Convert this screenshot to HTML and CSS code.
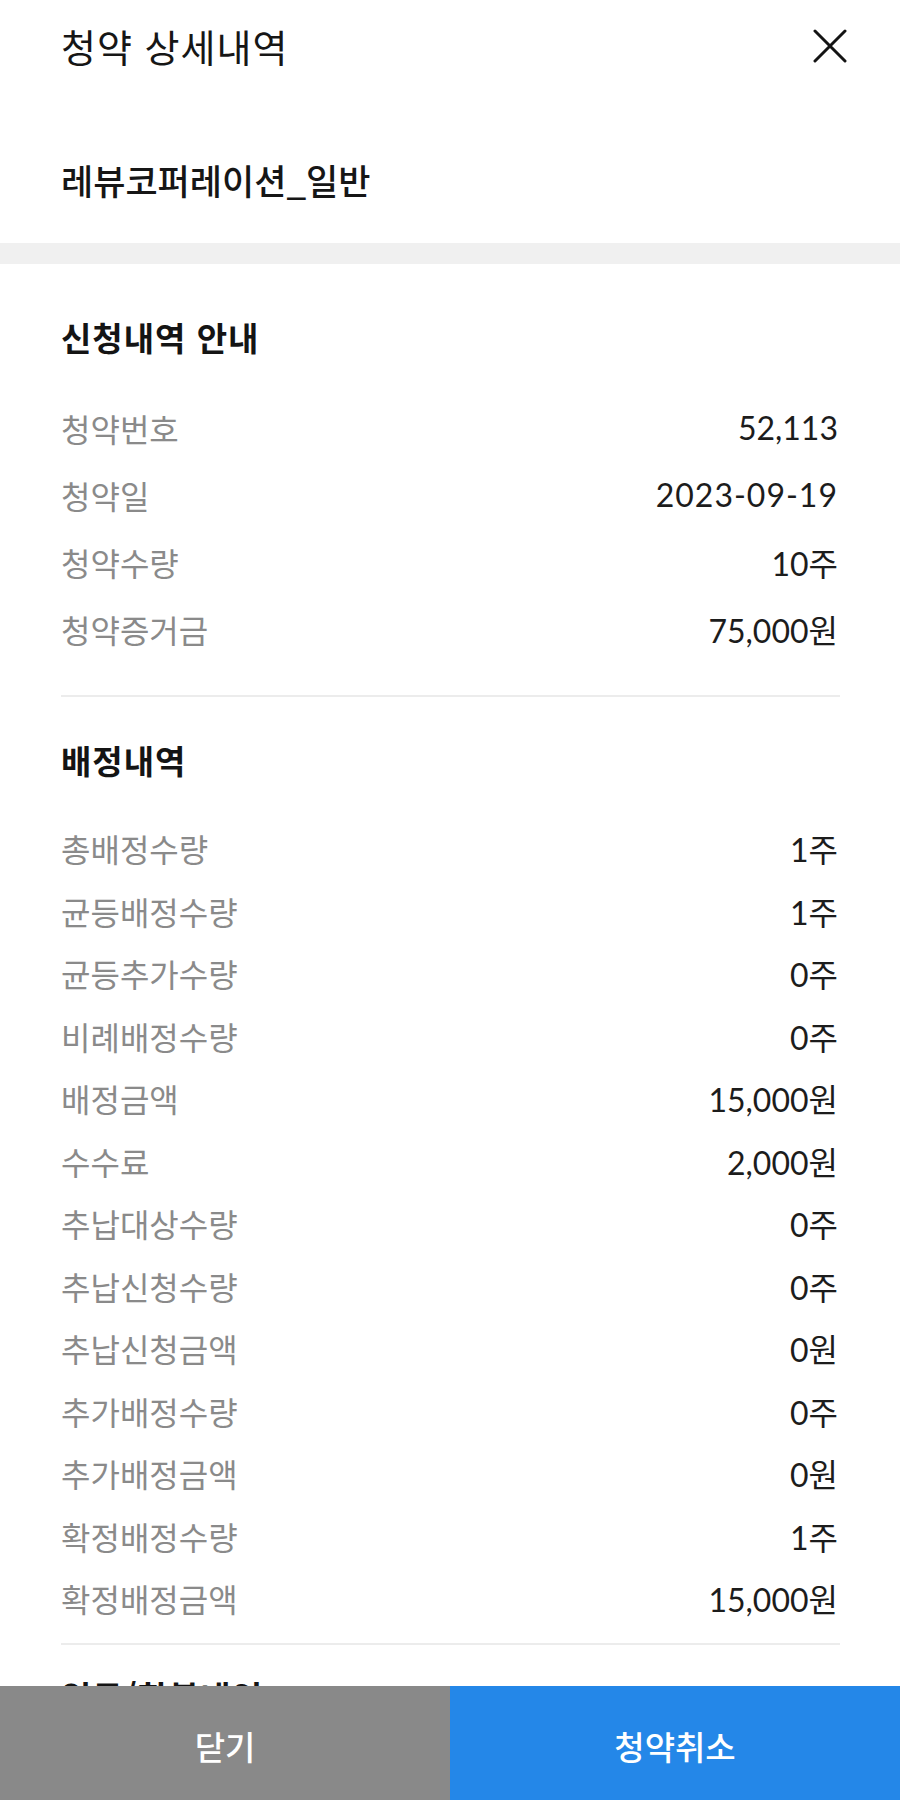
FILE: index.html
```html
<!DOCTYPE html>
<html lang="ko">
<head>
<meta charset="utf-8">
<title>청약 상세내역</title>
<link rel="stylesheet" href="styles.css">
</head>
<body>
<header class="header">
  <h1 class="title">청약 상세내역</h1>
  <button class="close" aria-label="닫기">
    <svg viewBox="0 0 34 34" width="34" height="34"><path d="M2 2 L32 32 M32 2 L2 32" stroke="#141414" stroke-width="3" stroke-linecap="round" fill="none"/></svg>
  </button>
</header>
<div class="company">레뷰코퍼레이션_일반</div>
<div class="band"></div>

<section class="section s1">
  <h2 class="heading">신청내역 안내</h2>
  <dl class="rows">
    <div class="row"><dt>청약번호</dt><dd>52,113</dd></div>
    <div class="row"><dt>청약일</dt><dd class="date">2023-09-19</dd></div>
    <div class="row"><dt>청약수량</dt><dd>10주</dd></div>
    <div class="row"><dt>청약증거금</dt><dd>75,000원</dd></div>
  </dl>
</section>

<section class="section s2">
  <h2 class="heading">배정내역</h2>
  <dl class="rows">
    <div class="row"><dt>총배정수량</dt><dd>1주</dd></div>
    <div class="row"><dt>균등배정수량</dt><dd>1주</dd></div>
    <div class="row"><dt>균등추가수량</dt><dd>0주</dd></div>
    <div class="row"><dt>비례배정수량</dt><dd>0주</dd></div>
    <div class="row"><dt>배정금액</dt><dd>15,000원</dd></div>
    <div class="row"><dt>수수료</dt><dd>2,000원</dd></div>
    <div class="row"><dt>추납대상수량</dt><dd>0주</dd></div>
    <div class="row"><dt>추납신청수량</dt><dd>0주</dd></div>
    <div class="row"><dt>추납신청금액</dt><dd>0원</dd></div>
    <div class="row"><dt>추가배정수량</dt><dd>0주</dd></div>
    <div class="row"><dt>추가배정금액</dt><dd>0원</dd></div>
    <div class="row"><dt>확정배정수량</dt><dd>1주</dd></div>
    <div class="row"><dt>확정배정금액</dt><dd>15,000원</dd></div>
  </dl>
</section>

<section class="section s3">
  <h2 class="heading">입금/환불내역</h2>
</section>

<footer class="footer">
  <button class="btn btn-close">닫기</button>
  <button class="btn btn-cancel">청약취소</button>
</footer>
</body>
</html>
```

FILE: styles.css
```css
html, body {
  margin: 0;
  padding: 0;
  background: #ffffff;
  height: 1800px;
  overflow: hidden;
}
body {
  font-family: "Noto Sans CJK KR", "Noto Sans", sans-serif;
  color: #141414;
}
.header {
  height: 92px;
  display: flex;
  align-items: center;
  justify-content: space-between;
  padding: 0 53px 0 61px;
}
.title {
  margin: 0;
  font-size: 38px;
  font-weight: 400;
  letter-spacing: 1px;
  line-height: 44px;
  color: #161616;
}
.close {
  border: 0;
  background: none;
  padding: 0;
  width: 34px;
  height: 34px;
  display: block;
}
.close svg { display: block; }
.company {
  padding: 66px 61px 41px;
  font-size: 35px;
  font-weight: 500;
  line-height: 44px;
  color: #161616;
}
.band {
  height: 21px;
  background: #f0f0f0;
}
.section {
  margin: 0 60px 0 61px;
}
.heading {
  margin: 0;
  font-size: 33px;
  font-weight: 700;
  letter-spacing: 1px;
  line-height: 44px;
  color: #141414;
}
.rows {
  margin: 0;
  padding: 0;
}
.row {
  display: flex;
  justify-content: space-between;
  align-items: center;
}
.row dt {
  font-size: 32px;
  color: #8a8a8a;
}
.row dd {
  margin: 0 2px 0 0;
  font-family: Lato, "Noto Sans CJK KR", sans-serif;
  font-size: 32px;
  color: #1c1c1c;
}
.row dd.date {
  letter-spacing: 1px;
}
.s1 {
  padding-top: 51px;
  padding-bottom: 33px;
  border-bottom: 2px solid #ececec;
}
.s1 .rows { margin-top: 35px; }
.s1 .row { height: 67px; }
.s2 {
  padding-top: 41px;
  padding-bottom: 13px;
  border-bottom: 2px solid #ececec;
}
.s2 .rows { margin-top: 35px; }
.s2 .row { height: 62.5px; }
.s3 {
  padding-top: 29px;
}
.footer {
  position: fixed;
  left: 0;
  bottom: 0;
  width: 100%;
  height: 114px;
  display: grid;
  grid-template-columns: 1fr 1fr;
}
.btn {
  border: 0;
  margin: 0;
  padding: 6px 0 0;
  font-family: "Noto Sans CJK KR", sans-serif;
  font-size: 33px;
  font-weight: 500;
  color: #ffffff;
}
.btn-close { background: #898989; }
.btn-cancel { background: #2487e8; }
```
